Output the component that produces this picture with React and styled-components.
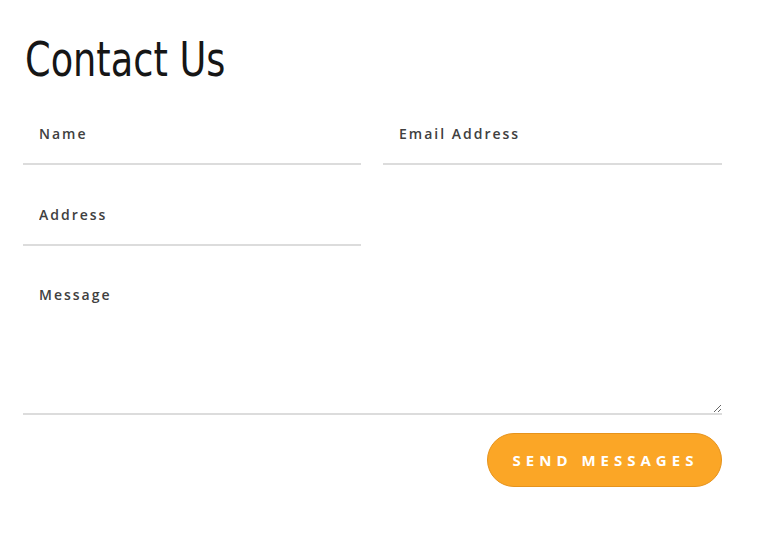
import React from "react";
import styled, { createGlobalStyle } from "styled-components";

const GlobalStyle = createGlobalStyle`
  body {
    margin: 0;
    background: #ffffff;
    font-family: "Open Sans", "Liberation Sans", sans-serif;
  }
`;

const Page = styled.div`
  padding: 30px 37px 40px 23px;
`;

const Title = styled.h1`
  display: inline-block;
  margin: 0 0 17px 2px;
  font-family: "DejaVu Sans", sans-serif;
  font-stretch: condensed;
  font-weight: 400;
  font-size: 48px;
  line-height: 58px;
  color: #161616;
  transform: scaleX(0.85);
  transform-origin: left center;
`;

const Form = styled.form`
  display: grid;
  grid-template-columns: 338px 339px;
  column-gap: 22px;
  row-gap: 21px;
`;

const fieldBase = `
  box-sizing: border-box;
  width: 100%;
  border: none;
  border-bottom: 2px solid #dcdcdc;
  background: transparent;
  padding: 0 16px;
  font-family: "Open Sans", "Liberation Sans", sans-serif;
  font-size: 14px;
  font-weight: 600;
  letter-spacing: 2px;
  color: #444;
  outline: none;

  &::placeholder {
    color: #404040;
    opacity: 1;
  }
`;

const Input = styled.input`
  ${fieldBase}
  height: 60px;
  padding-bottom: 1px;
`;

const TextArea = styled.textarea`
  ${fieldBase}
  grid-column: 1 / -1;
  height: 148px;
  padding-top: 16px;
  line-height: 24px;
  resize: vertical;
  display: block;
`;

const Actions = styled.div`
  grid-column: 1 / -1;
  display: flex;
  justify-content: flex-end;
  margin-top: -3px;
`;

const SendButton = styled.button`
  width: 235px;
  height: 54px;
  border: 1px solid #e6931c;
  border-radius: 27px;
  background: #fba626;
  color: #ffffff;
  font-family: "Open Sans", "Liberation Sans", sans-serif;
  font-weight: 700;
  font-size: 15px;
  letter-spacing: 5px;
  padding: 0 0 0 2px;
  cursor: pointer;
`;

export default function App() {
  return (
    <>
      <GlobalStyle />
      <Page>
        <Title>Contact Us</Title>
        <Form onSubmit={(e) => e.preventDefault()}>
          <Input type="text" placeholder="Name" />
          <Input type="email" placeholder="Email Address" />
          <Input type="text" placeholder="Address" />
          <div />
          <TextArea placeholder="Message" />
          <Actions>
            <SendButton type="submit">SEND MESSAGES</SendButton>
          </Actions>
        </Form>
      </Page>
    </>
  );
}
